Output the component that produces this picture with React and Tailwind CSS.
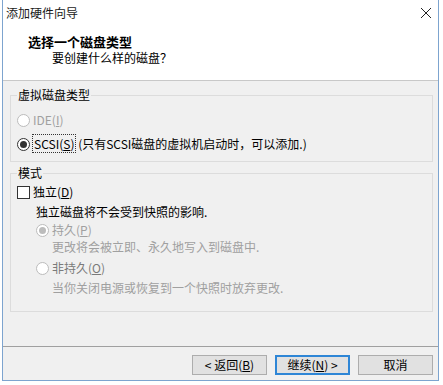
import React from "react";

const FONT = "font-['Noto_Sans_CJK_SC','Microsoft_YaHei',sans-serif]";

function Radio({ checked, disabled }) {
  return (
    <span
      className={`w-[13px] h-[13px] rounded-full border flex items-center justify-center shrink-0 bg-white ${
        disabled ? "border-[#bcbcbc]" : "border-[#333333]"
      }`}
    >
      {checked && (
        <span
          className={`w-[7px] h-[7px] rounded-full ${
            disabled ? "bg-[#bcbcbc]" : "bg-[#333333]"
          }`}
        />
      )}
    </span>
  );
}

function Button({ children, primary }) {
  return (
    <button
      className={`w-[75px] h-[20px] flex items-center justify-center text-[12px] leading-[16px] text-black bg-[#e1e1e1] ${
        primary ? "border-2 border-[#2e86d6]" : "border border-[#adadad]"
      }`}
    >
      {children}
    </button>
  );
}

export default function App() {
  return (
    <div className={`w-[443px] h-[385px] bg-white flex ${FONT}`}>
      <div className="w-[2px] shrink-0" />
      <div className="w-[437px] h-[381px] shrink-0 border border-t-0 border-[#7da4cf] flex flex-col bg-[#f0f0f0]">
        {/* Title bar */}
        <div className="h-[30px] bg-white flex items-start justify-between pl-[3px] pr-[6px] pt-[5px]">
          <span className="text-[12px] leading-[16px] text-[#1a1a1a]">添加硬件向导</span>
          <svg width="12" height="12" viewBox="0 0 12 12" className="mt-[2px]">
            <path d="M1 1 L11 11 M11 1 L1 11" stroke="#222" strokeWidth="1" fill="none" />
          </svg>
        </div>
        {/* Header */}
        <div className="h-[51px] bg-white border-b border-[#c8c8c8] pt-[4px] flex flex-col">
          <span className="pl-[25px] text-[13px] leading-[16px] font-bold text-black">选择一个磁盘类型</span>
          <span className="pl-[49px] text-[12px] leading-[16px] text-black">要创建什么样的磁盘？</span>
        </div>
        {/* Body */}
        <div className="flex-1 flex flex-col px-0">
          <fieldset className="mt-[6px] ml-[7px] mr-[5px] border border-[#dcdcdc] pl-[6px] pb-[9px]">
            <legend className="px-[1px] text-[12px] leading-[16px] text-black">虚拟磁盘类型</legend>
            <div className="mt-[9px] h-[16px] flex items-center gap-[3px]">
              <Radio disabled />
              <span className="text-[12px] leading-[16px] text-[#a0a0a0]">
                IDE(<span className="underline">I</span>)
              </span>
            </div>
            <div className="mt-[8px] h-[16px] flex items-center gap-[3px]">
              <Radio checked />
              <span className="text-[12px] leading-[16px] text-black">
                <span className="outline-1 outline-dotted outline-[#333] px-[1px]">
                  SCSI(<span className="underline">S</span>)
                </span>{" "}
                (只有SCSI磁盘的虚拟机启动时，可以添加.)
              </span>
            </div>
          </fieldset>

          <fieldset className="mt-[3px] ml-[7px] mr-[5px] border border-[#dcdcdc] pl-[6px] pb-[15px]">
            <legend className="px-[1px] text-[12px] leading-[16px] text-black">模式</legend>
            <div className="mt-[3px] h-[16px] flex items-center gap-[3px]">
              <span className="w-[13px] h-[13px] border border-[#333333] bg-white shrink-0" />
              <span className="text-[12px] leading-[16px] text-black">
                独立(<span className="underline">D</span>)
              </span>
            </div>
            <div className="mt-[4px] h-[16px] pl-[19px] text-[12px] leading-[16px] text-black">
              独立磁盘将不会受到快照的影响.
            </div>
            <div className="mt-[2px] h-[16px] pl-[19px] flex items-center gap-[3px]">
              <Radio checked disabled />
              <span className="text-[12px] leading-[16px] text-[#a0a0a0]">
                持久(<span className="underline">P</span>)
              </span>
            </div>
            <div className="mt-[1px] h-[16px] pl-[35px] text-[12px] leading-[16px] text-[#a0a0a0]">
              更改将会被立即、永久地写入到磁盘中.
            </div>
            <div className="mt-[5px] h-[16px] pl-[19px] flex items-center gap-[3px]">
              <Radio disabled />
              <span className="text-[12px] leading-[16px] text-[#7a7a7a]">
                非持久(<span className="underline">O</span>)
              </span>
            </div>
            <div className="mt-[4px] h-[16px] pl-[35px] text-[12px] leading-[16px] text-[#a0a0a0]">
              当你关闭电源或恢复到一个快照时放弃更改.
            </div>
          </fieldset>
          <div className="flex-1" />
        </div>
        {/* Footer */}
        <div className="border-t border-[#a0a0a0] pt-[8px] pb-[5px] pr-[5px] flex justify-end gap-[8px]">
          <Button>
            &lt; 返回(<span className="underline">B</span>)
          </Button>
          <Button primary>
            继续(<span className="underline">N</span>) &gt;
          </Button>
          <Button>取消</Button>
        </div>
      </div>
      <div className="flex-1" />
    </div>
  );
}
